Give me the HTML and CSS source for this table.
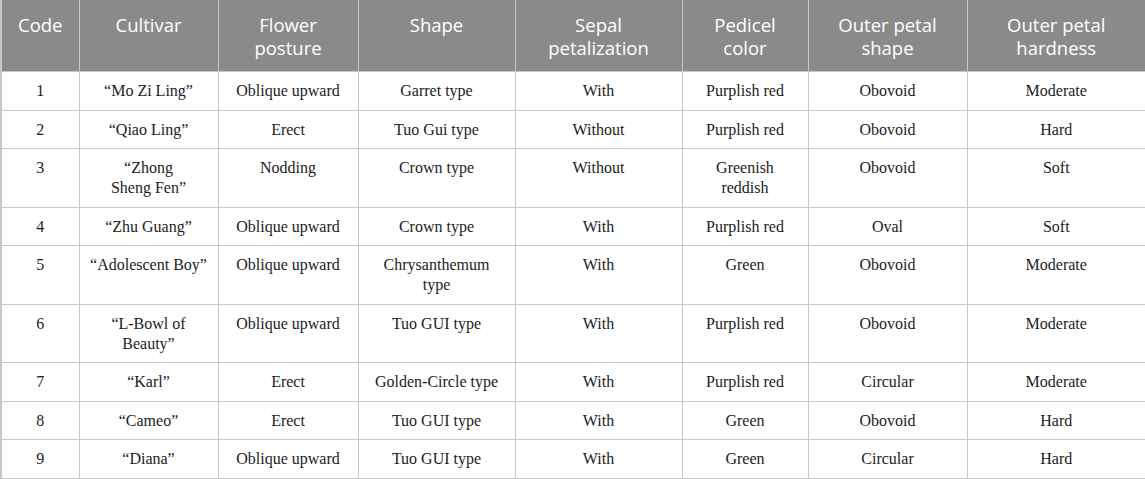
FILE: index.html
```html
<!DOCTYPE html>
<html lang="en">
<head>
<meta charset="utf-8">
<title>Cultivars</title>
<link rel="stylesheet" href="styles.css">
</head>
<body>
<table class="data">
  <colgroup>
    <col class="c1"><col class="c2"><col class="c3"><col class="c4">
    <col class="c5"><col class="c6"><col class="c7"><col class="c8">
  </colgroup>
  <thead>
    <tr>
      <th>Code</th>
      <th>Cultivar</th>
      <th>Flower<br>posture</th>
      <th>Shape</th>
      <th>Sepal<br>petalization</th>
      <th>Pedicel<br>color</th>
      <th>Outer petal<br>shape</th>
      <th>Outer petal<br>hardness</th>
    </tr>
  </thead>
  <tbody>
    <tr><td>1</td><td>“Mo Zi Ling”</td><td>Oblique upward</td><td>Garret type</td><td>With</td><td>Purplish red</td><td>Obovoid</td><td>Moderate</td></tr>
    <tr><td>2</td><td>“Qiao Ling”</td><td>Erect</td><td>Tuo Gui type</td><td>Without</td><td>Purplish red</td><td>Obovoid</td><td>Hard</td></tr>
    <tr><td>3</td><td>“Zhong<br>Sheng Fen”</td><td>Nodding</td><td>Crown type</td><td>Without</td><td>Greenish<br>reddish</td><td>Obovoid</td><td>Soft</td></tr>
    <tr><td>4</td><td>“Zhu Guang”</td><td>Oblique upward</td><td>Crown type</td><td>With</td><td>Purplish red</td><td>Oval</td><td>Soft</td></tr>
    <tr><td>5</td><td>“Adolescent Boy”</td><td>Oblique upward</td><td>Chrysanthemum<br>type</td><td>With</td><td>Green</td><td>Obovoid</td><td>Moderate</td></tr>
    <tr><td>6</td><td>“L-Bowl of<br>Beauty”</td><td>Oblique upward</td><td>Tuo GUI type</td><td>With</td><td>Purplish red</td><td>Obovoid</td><td>Moderate</td></tr>
    <tr><td>7</td><td>“Karl”</td><td>Erect</td><td>Golden-Circle type</td><td>With</td><td>Purplish red</td><td>Circular</td><td>Moderate</td></tr>
    <tr><td>8</td><td>“Cameo”</td><td>Erect</td><td>Tuo GUI type</td><td>With</td><td>Green</td><td>Obovoid</td><td>Hard</td></tr>
    <tr><td>9</td><td>“Diana”</td><td>Oblique upward</td><td>Tuo GUI type</td><td>With</td><td>Green</td><td>Circular</td><td>Hard</td></tr>
  </tbody>
</table>
</body>
</html>
```

FILE: styles.css
```css
html, body {
  margin: 0;
  padding: 0;
  background: #ffffff;
}

.data {
  width: 1145px;
  table-layout: fixed;
  border-collapse: collapse;
  font-family: "Liberation Serif", "Times New Roman", serif;
  color: #1c1c1c;
}

.c1 { width: 78px; }
.c2 { width: 139px; }
.c3 { width: 140px; }
.c4 { width: 157px; }
.c5 { width: 167px; }
.c6 { width: 126px; }
.c7 { width: 159px; }
.c8 { width: 179px; }

.data th {
  background: #8a8a8a;
  color: #ffffff;
  font-family: "Open Sans", "Noto Sans", sans-serif;
  font-weight: normal;
  font-size: 18.5px;
  line-height: 23px;
  height: 46px;
  padding: 13px 4px 12px;
  text-align: center;
  vertical-align: top;
  border: 1px solid #c6c6c6;
  border-top: none;
}

.data td {
  font-size: 16px;
  line-height: 20px;
  padding: 9px 6px 8.5px;
  text-align: center;
  vertical-align: top;
  border: 1px solid #c8c8c8;
}

.data tr > :first-child { border-left: 2px solid #c8c8c8; }
.data tr > :last-child { border-right: 2px solid #c8c8c8; }
.data tbody tr:last-child td { border-bottom: 2px solid #c8c8c8; }
```
